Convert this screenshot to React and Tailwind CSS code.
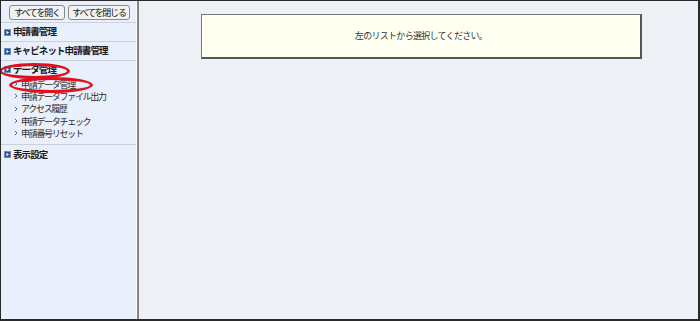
import React from "react";

const jp = { fontFamily: '"Noto Sans CJK JP", "Noto Sans", sans-serif' };

function BoxIcon() {
  return (
    <svg width="7" height="7" viewBox="0 0 7 7" className="shrink-0">
      <rect x="0" y="0" width="7" height="7" fill="#2a4f86" />
      <rect x="0.5" y="0.5" width="6" height="6" fill="none" stroke="#6b8fc4" strokeWidth="1" />
      <path d="M2.5 1.8 L5 3.5 L2.5 5.2 Z" fill="#fff" />
    </svg>
  );
}

function Chevron() {
  return (
    <svg width="4" height="6" viewBox="0 0 4 6" className="shrink-0">
      <path d="M0.8 0.8 L3 3 L0.8 5.2" fill="none" stroke="#4a6a98" strokeWidth="1" />
    </svg>
  );
}

function Header({ label, short = false }) {
  return (
    <div
      className={
        short
          ? "flex items-center gap-[2px] h-[17px] pl-[3px] text-[9.5px] tracking-[-0.9px] font-bold text-[#1a1a1a] leading-none"
          : "flex items-center gap-[2px] h-[18px] pl-[3px] text-[9.5px] tracking-[-0.9px] font-bold text-[#1a1a1a] leading-none"
      }
    >
      <BoxIcon />
      <span>{label}</span>
    </div>
  );
}

function Sub({ label }) {
  return (
    <div className="flex items-center gap-[3px] h-[12.3px] pl-[13px] text-[9px] tracking-[-1.3px] text-[#2a2a2a] leading-none">
      <Chevron />
      <span>{label}</span>
    </div>
  );
}

export default function App() {
  return (
    <div
      style={jp}
      className="relative w-[700px] h-[321px] border-t border-l border-r-2 border-b-2 border-[#2a2a2a] flex bg-[#edf1f5] overflow-hidden"
    >
      <div className="w-[136px] shrink-0 bg-[#e9f0fc] flex flex-col border-r border-white">
        <div className="flex gap-[3px] pl-[8px] pt-[4px] pb-[2px]">
          <button className="h-[15px] w-[56px] border border-[#8a8a8a] rounded-[3px] bg-[#f2f2f2] text-[9px] tracking-[-1.2px] leading-none text-[#111] px-0 whitespace-nowrap">
            すべてを開く
          </button>
          <button className="h-[15px] w-[62px] border border-[#8a8a8a] rounded-[3px] bg-[#f2f2f2] text-[9px] tracking-[-1.2px] leading-none text-[#111] px-0 whitespace-nowrap">
            すべてを閉じる
          </button>
        </div>
        <div className="border-t border-[#c9d1dc]">
          <Header label="申請書管理" />
        </div>
        <div className="border-t border-[#c9d1dc]">
          <Header label="キャビネット申請書管理" />
        </div>
        <div className="border-t border-[#c9d1dc] pb-[5px]">
          <Header label="データ管理" short />
          <div>
            <Sub label="申請データ管理" />
            <Sub label="申請データファイル出力" />
            <Sub label="アクセス履歴" />
            <Sub label="申請データチェック" />
            <Sub label="申請番号リセット" />
          </div>
        </div>
        <div className="border-t border-[#c9d1dc]">
          <Header label="表示設定" />
        </div>
      </div>
      <div className="w-[2px] shrink-0 bg-[#858585]" />
      <div className="flex-1 pt-[13px] pl-[62px]">
        <div className="w-[441px] h-[45px] bg-[#fffff2] border border-[#777] border-r-2 border-b-2 border-r-[#555] border-b-[#555] flex items-center justify-center text-[9px] tracking-[-0.7px] text-[#333]">
          左のリストから選択してください。
        </div>
      </div>
      <div className="absolute left-[-2px] top-[62px] w-[71px] h-[16px] rounded-[50%] border-[3px] border-[#e0101c]" />
      <div className="absolute left-[8px] top-[76px] w-[84px] h-[16px] rounded-[50%] border-[3px] border-[#e0101c]" />
    </div>
  );
}
